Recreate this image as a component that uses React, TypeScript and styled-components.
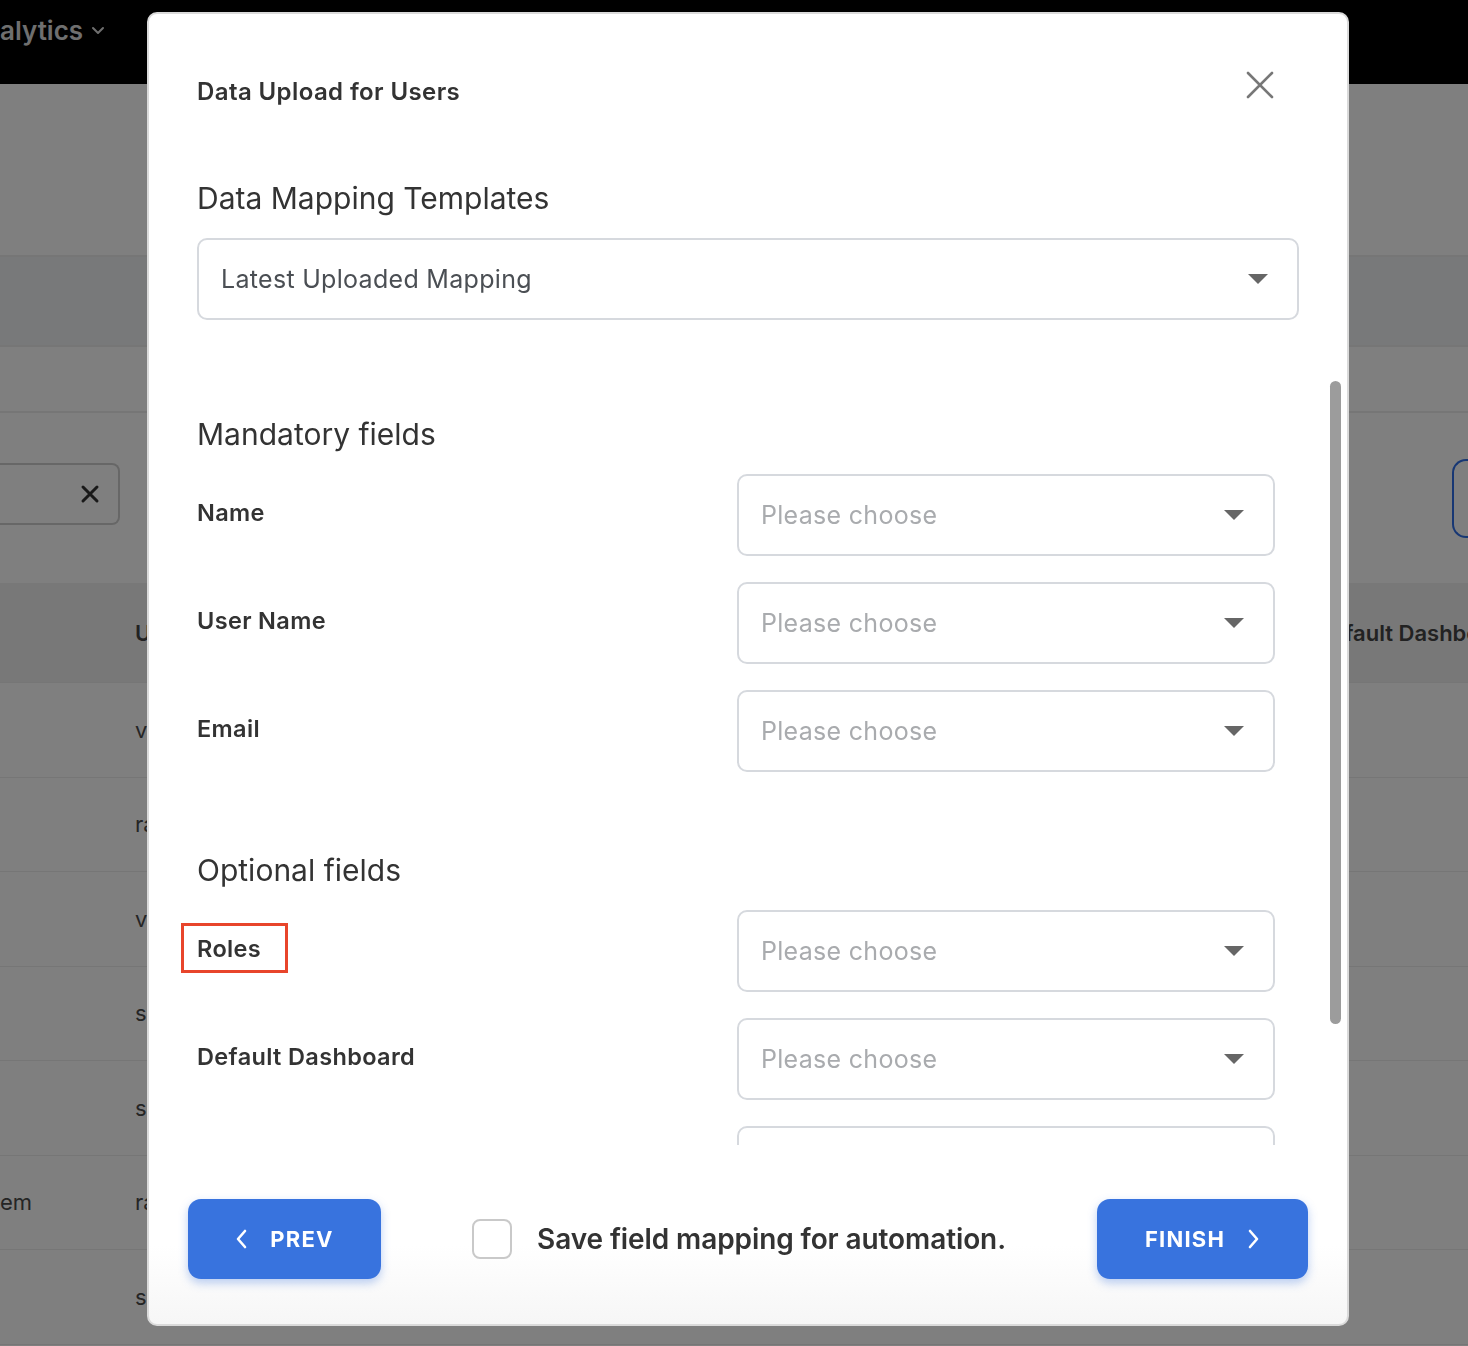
import React from "react";
import styled, { createGlobalStyle } from "styled-components";

const GlobalStyle = createGlobalStyle`
  html, body { margin: 0; padding: 0; }
  body {
    width: 1468px;
    height: 1346px;
    overflow: hidden;
    font-family: Inter, "Noto Sans", "Liberation Sans", sans-serif;
    background: #fff;
    color: #333;
  }
  * { box-sizing: border-box; }
`;

/* ---------- background app (dimmed by overlay) ---------- */

const Page = styled.div`
  width: 1468px;
  height: 1346px;
  overflow: hidden;
  display: flex;
  flex-direction: column;
`;

const Nav = styled.div`
  height: 84px;
  background: #000;
  display: flex;
  align-items: flex-start;
  padding-top: 16px;
`;

const NavItem = styled.div`
  display: flex;
  align-items: center;
  gap: 8px;
  color: #dedede;
  font-size: 26px;
  font-weight: 600;
  line-height: 30px;
`;

const Band = styled.div<{ $h: number; $bg?: string }>`
  height: ${(p) => p.$h}px;
  flex: none;
  background: ${(p) => p.$bg || "#fff"};
  border-bottom: 2px solid #ececec;
`;

const Toolbar = styled.div`
  height: 170px;
  flex: none;
  display: flex;
  justify-content: space-between;
  align-items: center;
`;

const SearchBox = styled.div`
  width: 120px;
  height: 62px;
  margin-bottom: 8px;
  border: 2px solid #cfcfcf;
  border-left: none;
  border-radius: 0 8px 8px 0;
  display: flex;
  align-items: center;
  justify-content: flex-end;
  padding-right: 18px;
  color: #333;
`;

const OutlineButton = styled.div`
  width: 16px;
  height: 79px;
  border: 2px solid #2f6fe8;
  border-right: none;
  border-radius: 14px 0 0 14px;
`;

const Table = styled.div`
  display: flex;
  flex-direction: column;
`;

const TRow = styled.div<{ $head?: boolean }>`
  display: grid;
  grid-template-columns: 135px 1181px 1fr;
  align-items: center;
  height: ${(p) => (p.$head ? "100px" : "94.5px")};
  flex: none;
  background: ${(p) => (p.$head ? "#f1f1f1" : "#fff")};
  border-bottom: 1px solid #ececec;
  font-size: 22px;
  color: #4a4a4a;
  white-space: nowrap;
  overflow: hidden;
`;

const HeadCell = styled.div`
  font-weight: 600;
  color: #444;
  overflow: hidden;
`;

const Cell = styled.div`
  overflow: hidden;
`;

/* ---------- modal ---------- */

const Overlay = styled.div`
  position: fixed;
  inset: 0;
  background: rgba(0, 0, 0, 0.5);
  display: flex;
  align-items: flex-start;
  padding: 12px 0 0 147px;
`;

const Modal = styled.div`
  position: relative;
  width: 1202px;
  height: 1314px;
  border: 2px solid #dadada;
  border-radius: 10px;
  background: linear-gradient(to bottom, #ffffff 94%, #f6f6f6 100%);
  display: flex;
  flex-direction: column;
`;

const Header = styled.div`
  display: flex;
  justify-content: space-between;
  align-items: flex-start;
  padding: 57px 73px 0 48px;
`;

const Title = styled.h2`
  margin: 7px 0 0;
  font-size: 24px;
  line-height: 28px;
  font-weight: 600;
  letter-spacing: 0.4px;
  color: #333;
`;

const CloseButton = styled.button`
  width: 28px;
  height: 28px;
  padding: 0;
  border: none;
  background: none;
  cursor: pointer;
  display: flex;
`;

const SectionTitle = styled.h3<{ $top: number }>`
  margin: ${(p) => p.$top}px 0 0;
  font-size: 30px;
  line-height: 40px;
  font-weight: 400;
  color: #333;
`;

const TemplateWrap = styled.div`
  padding: 0 48px;
  display: flex;
  flex-direction: column;
  gap: 20px;
`;

const SelectBox = styled.div<{ $placeholder?: boolean }>`
  height: 82px;
  border: 2px solid #d6d9de;
  border-radius: 10px;
  background: #fff;
  display: flex;
  align-items: center;
  justify-content: space-between;
  padding: 0 29px 0 22px;
  font-size: 25px;
  letter-spacing: 0.3px;
  color: ${(p) => (p.$placeholder ? "#a9abae" : "#4b4f54")};
`;

const Caret = styled.span`
  width: 0;
  height: 0;
  border-left: 10px solid transparent;
  border-right: 10px solid transparent;
  border-top: 10px solid #666;
`;

const ScrollArea = styled.div`
  position: relative;
  margin: 20px 6px 0 24px;
  height: 805px;
  overflow: hidden;
  flex: none;
`;

const ScrollContent = styled.div`
  padding: 74px 66px 0 24px;
`;

const ScrollThumb = styled.div`
  position: absolute;
  right: 0;
  top: 41px;
  width: 11px;
  height: 643px;
  border-radius: 6px;
  background: #9c9c9c;
`;

const FieldList = styled.div`
  margin-top: 20px;
  display: flex;
  flex-direction: column;
  gap: 26px;
`;

const FieldRow = styled.div`
  display: grid;
  grid-template-columns: 540px 1fr;
  align-items: center;
`;

const Label = styled.span<{ $highlight?: boolean }>`
  position: relative;
  justify-self: start;
  display: inline-block;
  margin-bottom: 4px;
  font-size: 23.5px;
  line-height: 28px;
  font-weight: 600;
  letter-spacing: 0.35px;
  color: #333;
  &::after {
    content: "";
    display: ${(p) => (p.$highlight ? "block" : "none")};
    position: absolute;
    left: -16px;
    right: -27px;
    top: -12px;
    bottom: -10px;
    border: 3px solid #e8452b;
  }
`;

const Footer = styled.div`
  margin-top: 54px;
  padding: 0 39px;
  display: flex;
  justify-content: space-between;
  align-items: center;
`;

const NavButton = styled.button<{ $w: number }>`
  width: ${(p) => p.$w}px;
  height: 80px;
  border: none;
  border-radius: 13px;
  background: #3873de;
  box-shadow: 0 4px 10px rgba(56, 115, 222, 0.35);
  color: #fff;
  display: flex;
  align-items: center;
  justify-content: center;
  gap: 22px;
  font-family: Inter, "Noto Sans", "Liberation Sans", sans-serif;
  font-size: 22px;
  font-weight: 700;
  letter-spacing: 1.2px;
  cursor: pointer;
`;

const SaveOption = styled.label`
  display: flex;
  align-items: center;
  gap: 25px;
  font-size: 28px;
  font-weight: 600;
  letter-spacing: -0.1px;
  color: #333;
  cursor: pointer;
`;

const CheckBox = styled.span`
  width: 40px;
  height: 40px;
  border: 2px solid #c9c9c9;
  border-radius: 8px;
  background: #fff;
`;

const ChevronLeft = () => (
  <svg width="13" height="20" viewBox="0 0 13 20" fill="none">
    <polyline points="10,2 3,10 10,18" stroke="#fff" strokeWidth="2.6" strokeLinecap="round" strokeLinejoin="round" />
  </svg>
);

const ChevronRight = () => (
  <svg width="13" height="20" viewBox="0 0 13 20" fill="none">
    <polyline points="3,2 10,10 3,18" stroke="#fff" strokeWidth="2.6" strokeLinecap="round" strokeLinejoin="round" />
  </svg>
);

const CloseIcon = () => (
  <svg width="28" height="28" viewBox="0 0 28 28" fill="none">
    <path d="M2 2 L26 26 M26 2 L2 26" stroke="#777" strokeWidth="2.6" strokeLinecap="round" />
  </svg>
);

const SmallX = () => (
  <svg width="20" height="20" viewBox="0 0 20 20" fill="none">
    <path d="M3 3 L17 17 M17 3 L3 17" stroke="#333" strokeWidth="3" strokeLinecap="round" />
  </svg>
);

const NavChevron = () => (
  <svg width="14" height="10" viewBox="0 0 14 10" fill="none">
    <polyline points="2,2 7,7 12,2" stroke="#dedede" strokeWidth="2" strokeLinecap="round" strokeLinejoin="round" />
  </svg>
);

const tableRows = [
  { a: "", b: "vivek.sharma" },
  { a: "", b: "rahul.k" },
  { a: "", b: "vinay.p" },
  { a: "", b: "suresh.m" },
  { a: "", b: "sanjay.r" },
  { a: "em", b: "ramesh.t" },
  { a: "", b: "sunil.d" },
];

const mandatory = ["Name", "User Name", "Email"];
const optional = ["Roles", "Default Dashboard", "Language"];

export default function App() {
  return (
    <>
      <GlobalStyle />
      <Page>
        <Nav>
          <NavItem>
            alytics <NavChevron />
          </NavItem>
        </Nav>
        <Band $h={173} />
        <Band $h={90} $bg="#f1f2f4" />
        <Band $h={66} />
        <Toolbar>
          <SearchBox>
            <SmallX />
          </SearchBox>
          <OutlineButton />
        </Toolbar>
        <Table>
          <TRow $head>
            <HeadCell />
            <HeadCell>User Name</HeadCell>
            <HeadCell>Default Dashboard</HeadCell>
          </TRow>
          {tableRows.map((r, i) => (
            <TRow key={i}>
              <Cell>{r.a}</Cell>
              <Cell>{r.b}</Cell>
              <Cell />
            </TRow>
          ))}
        </Table>
      </Page>

      <Overlay>
        <Modal>
          <Header>
            <Title>Data Upload for Users</Title>
            <CloseButton aria-label="Close">
              <CloseIcon />
            </CloseButton>
          </Header>

          <TemplateWrap>
            <SectionTitle $top={72}>Data Mapping Templates</SectionTitle>
            <SelectBox>
              <span>Latest Uploaded Mapping</span>
              <Caret />
            </SelectBox>
          </TemplateWrap>

          <ScrollArea>
            <ScrollContent>
              <SectionTitle $top={0}>Mandatory fields</SectionTitle>
              <FieldList>
                {mandatory.map((f) => (
                  <FieldRow key={f}>
                    <Label>{f}</Label>
                    <SelectBox $placeholder>
                      <span>Please choose</span>
                      <Caret />
                    </SelectBox>
                  </FieldRow>
                ))}
              </FieldList>
              <SectionTitle $top={78}>Optional fields</SectionTitle>
              <FieldList>
                {optional.map((f) => (
                  <FieldRow key={f}>
                    <Label $highlight={f === "Roles"}>{f}</Label>
                    <SelectBox $placeholder>
                      <span>Please choose</span>
                      <Caret />
                    </SelectBox>
                  </FieldRow>
                ))}
              </FieldList>
            </ScrollContent>
            <ScrollThumb />
          </ScrollArea>

          <Footer>
            <NavButton $w={193}>
              <ChevronLeft />
              PREV
            </NavButton>
            <SaveOption>
              <CheckBox />
              Save field mapping for automation.
            </SaveOption>
            <NavButton $w={211}>
              FINISH
              <ChevronRight />
            </NavButton>
          </Footer>
        </Modal>
      </Overlay>
    </>
  );
}
